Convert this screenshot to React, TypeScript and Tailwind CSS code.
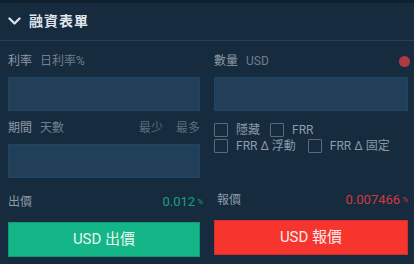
import React from 'react';

const font = { fontFamily: 'Roboto, "Noto Sans CJK TC", sans-serif' };

function Check({ label }: { label: string }) {
  return (
    <div className="flex items-center gap-2">
      <span className="w-[14px] h-[14px] border border-[#5b6b79] rounded-[1px]" />
      <span className="text-[12px] leading-[14px] text-[#8d9aa7]">{label}</span>
    </div>
  );
}

export default function App() {
  return (
    <div className="w-[414px] h-[264px] bg-[#172b3e] border-t-[3px] border-[#10202f] text-[#8d9aa7] overflow-hidden" style={font}>
      <div className="h-[38px] flex items-center gap-2 px-2 border-b border-[#2a4054]">
        <svg width="13" height="9" viewBox="0 0 13 9" className="shrink-0">
          <path d="M1.5 1.5 L6.5 6.5 L11.5 1.5" fill="none" stroke="#d8dfe6" strokeWidth="2.4" strokeLinecap="round" strokeLinejoin="round" />
        </svg>
        <span className="text-[14px] font-bold text-[#dfe5eb] tracking-[1px]">融資表單</span>
      </div>

      <div className="flex pl-2 pr-[6px] gap-[14px] pt-[12px]">
        <div className="w-[192px] flex flex-col">
          <div className="h-[16px] flex items-center gap-2 text-[12px]">
            <span className="text-[#8d9aa7]">利率</span>
            <span className="text-[#707f8d]">日利率%</span>
          </div>
          <div className="mt-[8px] h-[34px] bg-[#223f59] border border-[#1c4566]" />
          <div className="mt-[10px] h-[14px] flex items-center text-[12px]">
            <span className="text-[#8d9aa7]">期間</span>
            <span className="ml-2 text-[#707f8d]">天數</span>
            <span className="ml-auto text-[#5e6d7b]">最少</span>
            <span className="ml-[13px] text-[#5e6d7b]">最多</span>
          </div>
          <div className="mt-[9px] h-[34px] bg-[#223f59] border border-[#1c4566]" />
          <div className="mt-[17px] h-[14px] flex items-center text-[12px]">
            <span className="text-[#8d9aa7]">出價</span>
            <span className="ml-auto text-[13px] text-[#17a37a]">0.012</span>
            <span className="ml-[2px] mr-[-3px] text-[8px] text-[#17a37a]">%</span>
          </div>
          <div className="mt-[13px] h-[35px] bg-[#14b586] border border-[#0f9a70] flex items-center justify-center text-[15px] text-[#e6f6f0]">
            USD 出價
          </div>
        </div>

        <div className="w-[194px] flex flex-col">
          <div className="h-[16px] flex items-center gap-2 text-[12px]">
            <span className="text-[#8d9aa7]">數量</span>
            <span className="text-[#707f8d]">USD</span>
            <span className="ml-auto mr-[-2px] w-[11px] h-[11px] rounded-full bg-[#b03a44]" />
          </div>
          <div className="mt-[8px] h-[34px] bg-[#223f59] border border-[#1c4566]" />
          <div className="mt-[12px] flex flex-col gap-[2px]">
            <div className="flex items-center gap-[10px]">
              <Check label="隱藏" />
              <Check label="FRR" />
            </div>
            <div className="flex items-center gap-[12px]">
              <Check label="FRR Δ 浮動" />
              <Check label="FRR Δ 固定" />
            </div>
          </div>
          <div className="mt-[40px] h-[14px] flex items-center text-[12px] pl-[3px]">
            <span className="text-[#8d9aa7]">報價</span>
            <span className="ml-auto text-[13px] text-[#d2393f]">0.007466</span>
            <span className="ml-[2px] text-[8px] text-[#d2393f]">%</span>
          </div>
          <div className="mt-[13px] h-[35px] bg-[#f5352e] border border-[#d62d27] flex items-center justify-center text-[15px] text-[#fde9e8]">
            USD 報價
          </div>
        </div>
      </div>
    </div>
  );
}
